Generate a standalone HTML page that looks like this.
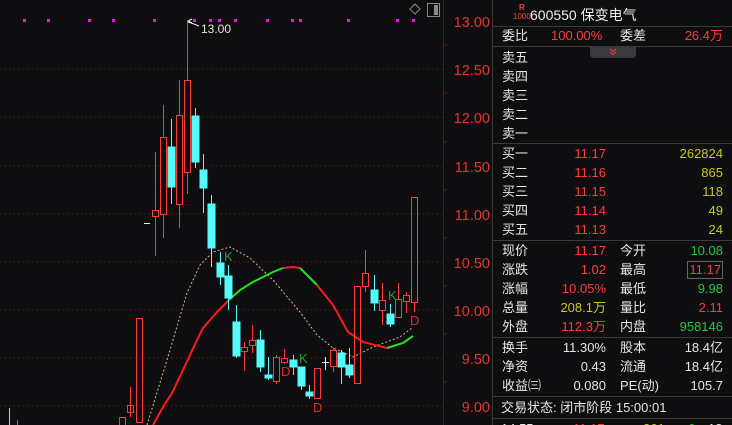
<!DOCTYPE html>
<html><head><meta charset="utf-8"><style>
*{margin:0;padding:0}
body{width:732px;height:425px;overflow:hidden;background:#0e0e11;font-family:"Liberation Sans","Noto Sans CJK SC",sans-serif;position:relative}
svg{position:absolute;left:0;top:0}
.p{position:absolute;left:492px;top:0;width:240px;height:425px;border-left:1px solid #3a3a3a;font-size:13px;color:#ddd}
.r{position:absolute;left:0;width:240px;height:19px;line-height:19px}
.r span{position:absolute}
.l1{left:9px}.v1{right:127px;text-align:right}.l2{left:127px}.v2{right:10px;text-align:right}
.hl{position:absolute;left:0;width:240px;height:1px;background:#3a3a3a}
.R{color:#ff3a3a}.G{color:#22c83c}.Y{color:#c8c820}.W{color:#e6e6e6}
</style></head><body>
<svg width="492" height="425" viewBox="0 0 492 425">
<g stroke="#7a0f0f" stroke-dasharray="1.5,3" stroke-width="1">
<line x1="0" y1="69" x2="443" y2="69"/><line x1="0" y1="117" x2="443" y2="117"/><line x1="0" y1="166" x2="443" y2="166"/><line x1="0" y1="214" x2="443" y2="214"/><line x1="0" y1="262" x2="443" y2="262"/><line x1="0" y1="310" x2="443" y2="310"/><line x1="0" y1="358" x2="443" y2="358"/><line x1="0" y1="406" x2="443" y2="406"/>
</g>
<line x1="443.5" y1="0" x2="443.5" y2="425" stroke="#5a1010"/>
<g stroke="#7a1414"><line x1="443" y1="45" x2="447" y2="45"/><line x1="443" y1="93" x2="447" y2="93"/><line x1="443" y1="142" x2="447" y2="142"/><line x1="443" y1="190" x2="447" y2="190"/><line x1="443" y1="238" x2="447" y2="238"/><line x1="443" y1="286" x2="447" y2="286"/><line x1="443" y1="334" x2="447" y2="334"/><line x1="443" y1="382" x2="447" y2="382"/></g>
<g fill="#e83232" font-size="14.5" text-anchor="end" font-family="Liberation Sans">
<text x="490" y="27">13.00</text><text x="490" y="75">12.50</text><text x="490" y="123">12.00</text><text x="490" y="172">11.50</text><text x="490" y="220">11.00</text><text x="490" y="268">10.50</text><text x="490" y="316">10.00</text><text x="490" y="364">9.50</text><text x="490" y="412">9.00</text>
</g>
<g fill="#e020e0">
<rect x="23" y="19" width="3" height="3"/><rect x="47" y="19" width="3" height="3"/><rect x="88" y="19" width="3" height="3"/><rect x="112" y="19" width="3" height="3"/><rect x="153" y="19" width="3" height="3"/><rect x="193" y="19" width="3" height="3"/><rect x="209" y="19" width="3" height="3"/><rect x="218" y="19" width="3" height="3"/><rect x="234" y="19" width="3" height="3"/><rect x="266" y="19" width="3" height="3"/><rect x="291" y="19" width="3" height="3"/><rect x="299" y="19" width="3" height="3"/><rect x="347" y="19" width="3" height="3"/><rect x="396" y="19" width="3" height="3"/><rect x="412" y="19" width="3" height="3"/>
</g>
<path d="M415 4 L420 9 L415 14 L410 9 Z" fill="none" stroke="#888"/>
<rect x="427.5" y="3.5" width="12" height="13" fill="none" stroke="#888"/><rect x="434" y="5" width="4" height="10" fill="#888"/>
<polyline fill="none" stroke="#e0b080" stroke-width="1" stroke-dasharray="2,2" points="147,425 167,360 187,293 200,265 213,252 230,247 250,258 273,280 300,312 317,335 333,348 353,357 373,347 400,337 412,328"/>
<polyline fill="none" stroke="#ff1a1a" stroke-width="2" points="153,425 163,407 172,393 183,370 197,340 203,328 217,312 229,300"/>
<polyline fill="none" stroke="#22e022" stroke-width="2" points="229,300 240,290 253,282 273,272 283,268"/>
<polyline fill="none" stroke="#ff1a1a" stroke-width="2" points="283,268 293,267 300,268"/>
<polyline fill="none" stroke="#22e022" stroke-width="2" points="300,268 317,285"/>
<polyline fill="none" stroke="#ff1a1a" stroke-width="2" points="317,285 333,305 348,332 363,342 387,348"/>
<polyline fill="none" stroke="#22e022" stroke-width="2" points="387,348 403,343 413,336"/>
<g stroke="#ff3a3a" fill="none" stroke-width="1">
<line x1="17.5" y1="420" x2="17.5" y2="425"/>
<rect x="119.5" y="417.5" width="6" height="8"/>
<line x1="130.5" y1="387" x2="130.5" y2="417"/><rect x="127.5" y="405.5" width="6" height="7"/>
<rect x="136.5" y="318.5" width="6" height="104"/>
<line x1="155.5" y1="152" x2="155.5" y2="256"/><rect x="152.5" y="210.5" width="6" height="6" fill="#0e0e11"/>
<line x1="163.5" y1="105" x2="163.5" y2="238"/><rect x="160.5" y="137.5" width="6" height="77" fill="#0e0e11"/>
<line x1="179.5" y1="80" x2="179.5" y2="228"/><rect x="176.5" y="115.5" width="6" height="89" fill="#0e0e11"/>
<line x1="187.5" y1="21" x2="187.5" y2="194"/><rect x="184.5" y="80.5" width="6" height="92" fill="#0e0e11"/>
<line x1="244.5" y1="342" x2="244.5" y2="371"/><rect x="241.5" y="347.5" width="6" height="4" fill="#0e0e11"/>
<line x1="252.5" y1="325" x2="252.5" y2="353"/><rect x="249.5" y="340.5" width="6" height="5" fill="#0e0e11"/>
<line x1="276.5" y1="355" x2="276.5" y2="384"/><rect x="273.5" y="357.5" width="6" height="24" fill="#0e0e11"/>
<line x1="284.5" y1="349" x2="284.5" y2="364"/><rect x="281.5" y="358.5" width="6" height="4" fill="#0e0e11"/>
<line x1="317.5" y1="368" x2="317.5" y2="399"/><rect x="314.5" y="368.5" width="6" height="30" fill="#0e0e11"/>
<line x1="333.5" y1="348" x2="333.5" y2="372"/><rect x="330.5" y="350.5" width="6" height="16" fill="#0e0e11"/>
<rect x="354.5" y="286.5" width="6" height="97"/>
<line x1="365.5" y1="250" x2="365.5" y2="292"/><rect x="362.5" y="273.5" width="6" height="13" fill="#0e0e11"/>
<line x1="382.5" y1="283" x2="382.5" y2="325"/><rect x="379.5" y="300.5" width="6" height="10" fill="#0e0e11"/>
<line x1="398.5" y1="283" x2="398.5" y2="317"/><rect x="395.5" y="299.5" width="6" height="18" fill="#0e0e11"/>
<line x1="406.5" y1="292" x2="406.5" y2="313"/><rect x="403.5" y="295.5" width="6" height="6" fill="#0e0e11"/>
<line x1="414.5" y1="302" x2="414.5" y2="312"/><rect x="411.5" y="197.5" width="6" height="105"/>
</g>
<g stroke="#55fafa" fill="#55fafa">
<line x1="9.5" y1="408" x2="9.5" y2="425"/>
<line x1="171.5" y1="119" x2="171.5" y2="204"/><rect x="168" y="147" width="7" height="40"/>
<line x1="195.5" y1="108" x2="195.5" y2="168"/><rect x="192" y="116" width="7" height="46"/>
<line x1="203.5" y1="154" x2="203.5" y2="213"/><rect x="200" y="170" width="7" height="18"/>
<line x1="211.5" y1="195" x2="211.5" y2="267"/><rect x="208" y="204" width="7" height="44"/>
<line x1="220.5" y1="252" x2="220.5" y2="285"/><rect x="217" y="263" width="7" height="14"/>
<line x1="228.5" y1="265" x2="228.5" y2="310"/><rect x="225" y="276" width="7" height="22"/>
<line x1="236.5" y1="305" x2="236.5" y2="358"/><rect x="233" y="322" width="7" height="34"/>
<line x1="260.5" y1="330" x2="260.5" y2="372"/><rect x="257" y="340" width="7" height="27"/>
<line x1="268.5" y1="357" x2="268.5" y2="380"/><rect x="265" y="375" width="7" height="3"/>
<line x1="293.5" y1="355" x2="293.5" y2="375"/><rect x="290" y="360" width="7" height="7"/>
<line x1="301.5" y1="367" x2="301.5" y2="390"/><rect x="298" y="367" width="7" height="19"/>
<line x1="309.5" y1="385" x2="309.5" y2="399"/><rect x="306" y="392" width="7" height="4"/>
<line x1="341.5" y1="350" x2="341.5" y2="384"/><rect x="338" y="353" width="7" height="14"/>
<line x1="349.5" y1="348" x2="349.5" y2="378"/><rect x="346" y="365" width="7" height="10"/>
<line x1="374.5" y1="275" x2="374.5" y2="311"/><rect x="371" y="290" width="7" height="13"/>
<line x1="390.5" y1="304" x2="390.5" y2="327"/><rect x="387" y="314" width="7" height="10"/>
</g>
<g stroke="#eee"><line x1="144" y1="223.5" x2="150" y2="223.5"/><line x1="322" y1="362.5" x2="329" y2="362.5"/><line x1="325.5" y1="357" x2="325.5" y2="370"/></g>
<path d="M192 23 L188 21 L192 19 M188 22 L194 24 L199 26" stroke="#eee" fill="none"/>
<text x="201" y="33" fill="#e6e6e6" font-size="12" font-family="Liberation Sans">13.00</text>
<g font-size="13" font-family="Liberation Sans"><text x="224" y="261" fill="#22a030">K</text><text x="299" y="363" fill="#22a030">K</text><text x="388" y="300" fill="#22a030">K</text>
<text x="281" y="376" fill="#e02828">D</text><text x="313" y="412" fill="#e02828">D</text><text x="410" y="325" fill="#e02828">D</text></g>
</svg>
<div class="p">
<div style="position:absolute;left:20px;top:3px;color:#ff3a3a;font-size:8px;line-height:9px;text-align:center;font-weight:bold">R<br><span style="font-weight:normal">1000</span></div>
<div style="position:absolute;left:37px;top:5px;font-size:14px;color:#eee">600550 保变电气</div>
<div class="hl" style="top:26px"></div>
<div class="r" style="top:26px"><span class="l1 W">委比</span><span class="R" style="left:58px">100.00%</span><span class="l2 W">委差</span><span class="v2 R">26.4万</span></div>
<div class="hl" style="top:46px"></div>
<div style="position:absolute;left:97px;top:47px;width:46px;height:11px;background:#3a3a3e;border-radius:0 0 4px 4px"><svg width="46" height="11" style="position:absolute;left:0;top:0"><path d="M20 2 L23 4.5 L26 2 M20 5 L23 7.5 L26 5" stroke="#ff3a3a" fill="none"/></svg></div>
<div class="r" style="top:48px"><span class="l1 W">卖五</span></div>
<div class="r" style="top:67px"><span class="l1 W">卖四</span></div>
<div class="r" style="top:86px"><span class="l1 W">卖三</span></div>
<div class="r" style="top:105px"><span class="l1 W">卖二</span></div>
<div class="r" style="top:124px"><span class="l1 W">卖一</span></div>
<div class="hl" style="top:143px"></div>
<div class="r" style="top:144px"><span class="l1 W">买一</span><span class="v1 R">11.17</span><span class="v2 Y">262824</span></div>
<div class="r" style="top:163px"><span class="l1 W">买二</span><span class="v1 R">11.16</span><span class="v2 Y">865</span></div>
<div class="r" style="top:182px"><span class="l1 W">买三</span><span class="v1 R">11.15</span><span class="v2 Y">118</span></div>
<div class="r" style="top:201px"><span class="l1 W">买四</span><span class="v1 R">11.14</span><span class="v2 Y">49</span></div>
<div class="r" style="top:220px"><span class="l1 W">买五</span><span class="v1 R">11.13</span><span class="v2 Y">24</span></div>
<div class="hl" style="top:240px"></div>
<div class="r" style="top:241px"><span class="l1 W">现价</span><span class="v1 R">11.17</span><span class="l2 W">今开</span><span class="v2 G">10.08</span></div>
<div class="r" style="top:260px"><span class="l1 W">涨跌</span><span class="v1 R">1.02</span><span class="l2 W">最高</span><span class="v2 R" style="border:1px solid #666;padding:0 1px;line-height:16px;top:1px">11.17</span></div>
<div class="r" style="top:279px"><span class="l1 W">涨幅</span><span class="v1 R">10.05%</span><span class="l2 W">最低</span><span class="v2 G">9.98</span></div>
<div class="r" style="top:298px"><span class="l1 W">总量</span><span class="v1 Y">208.1万</span><span class="l2 W">量比</span><span class="v2 R">2.11</span></div>
<div class="r" style="top:317px"><span class="l1 W">外盘</span><span class="v1 R">112.3万</span><span class="l2 W">内盘</span><span class="v2 G">958146</span></div>
<div class="hl" style="top:337px"></div>
<div class="r" style="top:338px"><span class="l1 W">换手</span><span class="v1 W">11.30%</span><span class="l2 W">股本</span><span class="v2 W">18.4亿</span></div>
<div class="r" style="top:357px"><span class="l1 W">净资</span><span class="v1 W">0.43</span><span class="l2 W">流通</span><span class="v2 W">18.4亿</span></div>
<div class="r" style="top:376px"><span class="l1 W">收益㈢</span><span class="v1 W">0.080</span><span class="l2 W">PE(动)</span><span class="v2 W">105.7</span></div>
<div class="hl" style="top:396px"></div>
<div class="r" style="top:398px"><span class="W" style="left:8px">交易状态: 闭市阶段 15:00:01</span></div>
<div class="hl" style="top:418px"></div>
<div class="r" style="top:419px;height:6px;overflow:hidden"><span class="W" style="left:8px;top:0">14:55</span><span class="R" style="left:80px">11.17</span><span class="Y" style="left:150px">261</span><span class="G" style="left:195px">6</span><span class="W" style="left:215px">18</span></div>
</div>
</body></html>
